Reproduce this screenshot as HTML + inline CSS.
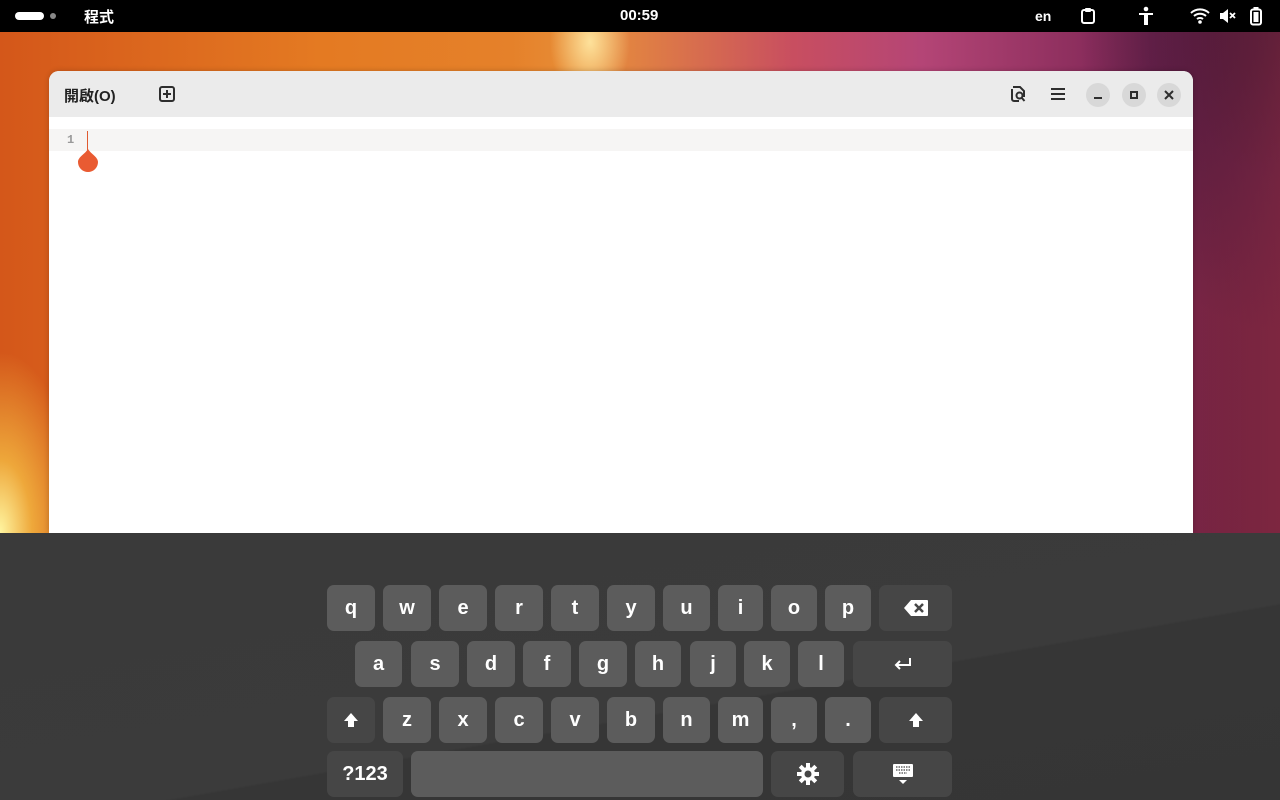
<!DOCTYPE html>
<html><head><meta charset="utf-8"><style>
*{margin:0;padding:0;box-sizing:border-box}
body{width:1280px;height:800px;overflow:hidden;position:relative;font-family:"Liberation Sans","Noto Sans CJK TC",sans-serif;background:#333}
#wall{position:absolute;left:0;top:32px;width:1280px;height:501px;
background:
radial-gradient(ellipse 40px 60px at 590px 10px,rgba(255,230,160,.95),rgba(255,220,150,0) 100%),
radial-gradient(ellipse 80px 180px at 0px 500px,rgba(255,245,160,1),rgba(255,220,80,.6) 40%,rgba(255,200,50,0) 100%),
radial-gradient(ellipse 200px 300px at 1280px 0px,rgba(40,15,45,1),rgba(60,20,60,.6) 50%,rgba(80,20,60,0) 100%),
linear-gradient(90deg,#d4571a 0%,#e47a22 25%,#e5812a 40%,#e8903a 46%,#c84e60 62%,#b44576 72%,#8a2d5c 85%,#6a2040 95%,#5a1a3a 100%);}
#wall:after{content:"";position:absolute;inset:0;background:linear-gradient(90deg,rgba(240,140,20,0) 0%,rgba(0,0,0,0) 90%,rgba(160,50,70,.5) 100%)}
#top{position:absolute;left:0;top:0;width:1280px;height:32px;background:#000;color:#fff;font-size:15px}
#win{position:absolute;left:49px;top:71px;width:1144px;height:462px;background:#fff;border-radius:10px 10px 0 0;overflow:hidden;box-shadow:0 0 6px rgba(0,0,0,.2)}
#hdr{height:46px;background:#ebebeb;position:relative}
#line{position:absolute;left:0;top:58px;width:1144px;height:22px;background:#f6f5f4}
.rb{position:absolute;top:12px;width:24px;height:24px;border-radius:50%;background:#d8d8d8}
#kb{position:absolute;left:0;top:533px;width:1280px;height:267px;background:linear-gradient(170deg,#3a3a3a 0%,#3b3b3b 60%,#363636 60.5%,#353535 100%)}
.k{position:absolute;height:46px;border-radius:7px;background:#5c5c5c;color:#fff;font-size:20px;font-weight:bold;display:flex;align-items:center;justify-content:center;font-family:"Liberation Sans",sans-serif}
.d{background:#464646}
</style></head><body>
<div id="top">
<div style="position:absolute;left:15px;top:12px;width:29px;height:8px;border-radius:4px;background:#fff"></div>
<div style="position:absolute;left:50px;top:13px;width:6px;height:6px;border-radius:50%;background:#888"></div>
<div style="position:absolute;left:84px;top:6px;font-weight:bold">程式</div>
<div style="position:absolute;left:620px;top:7px;font-weight:bold;font-size:15px">00:59</div>
<div style="position:absolute;left:1035px;top:8px;font-size:14px;font-weight:bold">en</div>
<svg style="position:absolute;left:1080px;top:7px" width="16" height="18" viewBox="0 0 16 18"><rect x="2" y="3" width="12" height="13" rx="2" fill="none" stroke="#fff" stroke-width="2"/><rect x="5" y="1" width="6" height="4" rx="1" fill="#fff"/></svg>
<svg style="position:absolute;left:1137px;top:6px" width="18" height="20" viewBox="0 0 18 20"><circle cx="9" cy="3" r="2.3" fill="#fff"/><path d="M2 7h14v2h-5v10h-2v-5h-0v5h-2V9H2z" fill="#fff"/></svg>
<svg style="position:absolute;left:1190px;top:8px" width="20" height="16" viewBox="0 0 20 16"><path d="M1 5a13 13 0 0 1 18 0M4 8a9 9 0 0 1 12 0M7 11a5 5 0 0 1 6 0" fill="none" stroke="#fff" stroke-width="2"/><circle cx="10" cy="14" r="1.8" fill="#fff"/></svg>
<svg style="position:absolute;left:1219px;top:8px" width="18" height="16" viewBox="0 0 18 16"><path d="M1 5h3l5-4v14l-5-4H1z" fill="#fff"/><path d="M11 5l5 5M16 5l-5 5" stroke="#fff" stroke-width="1.8"/></svg>
<svg style="position:absolute;left:1249px;top:6px" width="14" height="20" viewBox="0 0 14 20"><rect x="4.5" y="1" width="5" height="3" fill="#fff"/><rect x="2" y="3.5" width="10" height="15" rx="2" fill="none" stroke="#fff" stroke-width="2"/><rect x="4.5" y="6" width="5" height="10" fill="#fff"/></svg>
</div>
<div id="wall"></div>
<div id="win">
<div id="hdr">
<div style="position:absolute;left:15px;top:14px;font-size:15px;font-weight:bold;color:#222">開啟(O)</div>
<svg style="position:absolute;left:109px;top:14px" width="18" height="18" viewBox="0 0 18 18"><rect x="2" y="2" width="14" height="14" rx="2" fill="none" stroke="#2e2e2e" stroke-width="2"/><path d="M9 5v8M5 9h8" stroke="#2e2e2e" stroke-width="2"/></svg>
<svg style="position:absolute;left:960px;top:14px" width="18" height="18" viewBox="0 0 18 18"><path d="M4 2h7l4 4v6M10 16H5a2 2 0 0 1-2-2V4" fill="none" stroke="#2e2e2e" stroke-width="2"/><circle cx="10.5" cy="10.5" r="3" fill="none" stroke="#2e2e2e" stroke-width="2"/><path d="M12.5 12.5l3 3.5" stroke="#2e2e2e" stroke-width="2"/></svg>
<svg style="position:absolute;left:1000px;top:15px" width="18" height="16" viewBox="0 0 18 16"><path d="M2 3h14M2 8h14M2 13h14" stroke="#2e2e2e" stroke-width="2"/></svg>
<div class="rb" style="left:1037px"><div style="position:absolute;left:8px;top:14px;width:8px;height:2px;background:#2e2e2e"></div></div>
<div class="rb" style="left:1073px"><div style="position:absolute;left:8px;top:8px;width:8px;height:8px;border:2px solid #2e2e2e"></div></div>
<div class="rb" style="left:1108px"><svg style="position:absolute;left:6px;top:6px" width="12" height="12"><path d="M2 2l8 8M10 2l-8 8" stroke="#2e2e2e" stroke-width="2"/></svg></div>
</div>
<div id="line"></div>
<div style="position:absolute;left:18px;top:62px;font-size:12px;font-weight:bold;color:#999;font-family:'Liberation Mono',monospace">1</div>
<div style="position:absolute;left:38px;top:60px;width:1px;height:22px;background:#e05a30"></div>
<svg style="position:absolute;left:28px;top:78px" width="22" height="24" viewBox="0 0 22 24"><path d="M11 0C8 5 1 8 1 13a10 10 0 0 0 20 0C21 8 14 5 11 0z" fill="#e95b32"/></svg>
</div>
<div id="kb">
<div class="k" style="left:327px;top:52px;width:48px">q</div>
<div class="k" style="left:383px;top:52px;width:48px">w</div>
<div class="k" style="left:439px;top:52px;width:48px">e</div>
<div class="k" style="left:495px;top:52px;width:48px">r</div>
<div class="k" style="left:551px;top:52px;width:48px">t</div>
<div class="k" style="left:607px;top:52px;width:48px">y</div>
<div class="k" style="left:663px;top:52px;width:47px">u</div>
<div class="k" style="left:718px;top:52px;width:45px">i</div>
<div class="k" style="left:771px;top:52px;width:46px">o</div>
<div class="k" style="left:825px;top:52px;width:46px">p</div>
<div class="k d" style="left:879px;top:52px;width:73px"><svg width="26" height="18" viewBox="0 0 26 18"><path d="M8 1h16a1 1 0 0 1 1 1v14a1 1 0 0 1-1 1H8L1 9z" fill="#fff"/><path d="M12 5l8 8M20 5l-8 8" stroke="#464646" stroke-width="2.5"/></svg></div>
<div class="k" style="left:355px;top:108px;width:47px">a</div>
<div class="k" style="left:411px;top:108px;width:48px">s</div>
<div class="k" style="left:467px;top:108px;width:48px">d</div>
<div class="k" style="left:523px;top:108px;width:48px">f</div>
<div class="k" style="left:579px;top:108px;width:48px">g</div>
<div class="k" style="left:635px;top:108px;width:46px">h</div>
<div class="k" style="left:690px;top:108px;width:46px">j</div>
<div class="k" style="left:744px;top:108px;width:46px">k</div>
<div class="k" style="left:798px;top:108px;width:46px">l</div>
<div class="k d" style="left:853px;top:108px;width:99px"><svg width="20" height="14" viewBox="0 0 20 14"><path d="M17 1v7H3M7 4L3 8l4 4" fill="none" stroke="#fff" stroke-width="2"/></svg></div>
<div class="k d" style="left:327px;top:164px;width:48px"><svg width="16" height="16" viewBox="0 0 16 16"><path d="M8 1l7 8h-4v6H5V9H1z" fill="#fff"/></svg></div>
<div class="k" style="left:383px;top:164px;width:48px">z</div>
<div class="k" style="left:439px;top:164px;width:48px">x</div>
<div class="k" style="left:495px;top:164px;width:48px">c</div>
<div class="k" style="left:551px;top:164px;width:48px">v</div>
<div class="k" style="left:607px;top:164px;width:48px">b</div>
<div class="k" style="left:663px;top:164px;width:47px">n</div>
<div class="k" style="left:718px;top:164px;width:45px">m</div>
<div class="k" style="left:771px;top:164px;width:46px">,</div>
<div class="k" style="left:825px;top:164px;width:46px">.</div>
<div class="k d" style="left:879px;top:164px;width:73px"><svg width="16" height="16" viewBox="0 0 16 16"><path d="M8 1l7 8h-4v6H5V9H1z" fill="#fff"/></svg></div>
<div class="k d" style="left:327px;top:218px;width:76px;font-size:20px">?123</div>
<div class="k" style="left:411px;top:218px;width:352px"></div>
<div class="k d" style="left:771px;top:218px;width:73px"><svg width="22" height="22" viewBox="0 0 22 22"><g fill="#fff"><circle cx="11" cy="11" r="7"/><rect x="9" y="0" width="4" height="22"/><rect x="0" y="9" width="22" height="4"/><rect x="9" y="0" width="4" height="22" transform="rotate(45 11 11)"/><rect x="9" y="0" width="4" height="22" transform="rotate(-45 11 11)"/></g><circle cx="11" cy="11" r="3.5" fill="#464646"/></svg></div>
<div class="k d" style="left:853px;top:218px;width:99px"><svg width="22" height="22" viewBox="0 0 22 22"><rect x="1" y="1" width="20" height="13" rx="1" fill="#fff"/><path d="M4 4h14M4 7h14M7 10h8" stroke="#464646" stroke-width="1.2" stroke-dasharray="1.5 1"/><path d="M7 17h8l-4 4z" fill="#fff"/></svg></div>
</div>
</body></html>
